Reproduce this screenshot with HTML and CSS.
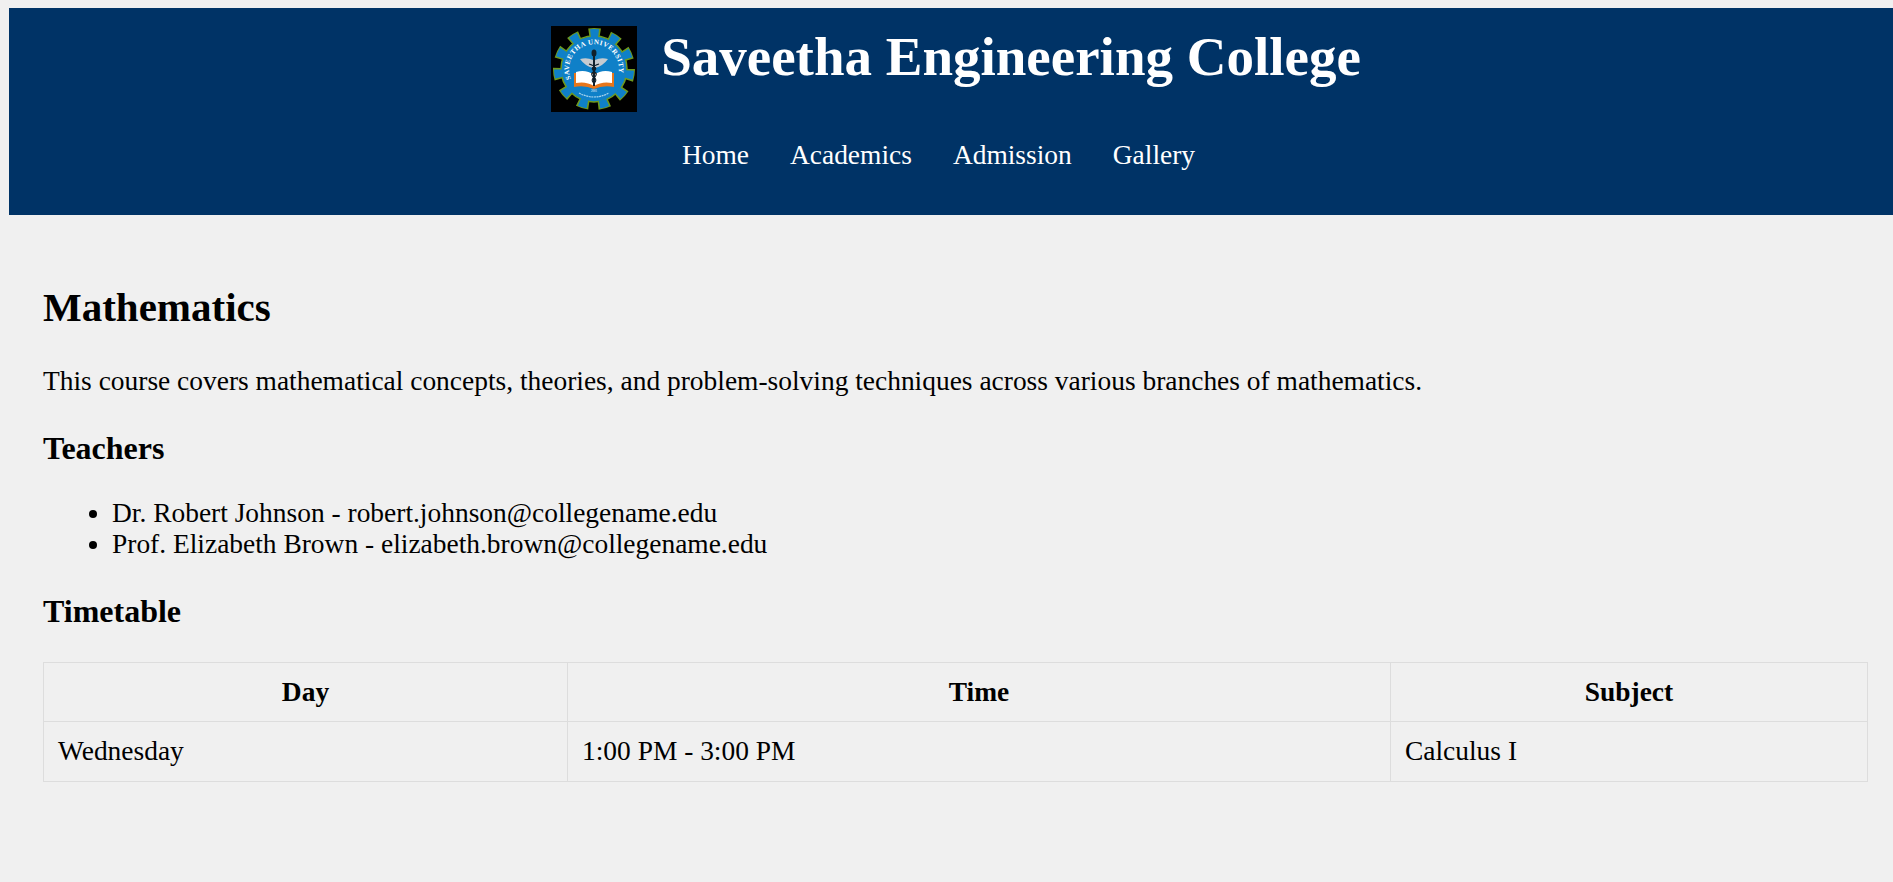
FILE: index.html
```html
<!DOCTYPE html>
<html lang="en">
<head>
    <meta charset="UTF-8">
    <meta name="viewport" content="width=device-width, initial-scale=1.0">
    <title>Mathematics</title>
    <link rel="stylesheet" href="styles.css">
</head>
<body>
    <header class="site-header">
        <div class="brand">
            <svg class="logo" viewBox="0 0 86 86" role="img" aria-label="Saveetha University logo">
                <rect width="86" height="86" fill="#000"/>
                <circle cx="43" cy="43" r="37" fill="none" stroke="#6f9a1e" stroke-width="8" pathLength="220" stroke-dasharray="11 9"/>
                <circle cx="43" cy="43" r="33" fill="#0f80c8" stroke="#6f9a1e" stroke-width="1.500"/>
                <circle cx="43" cy="43" r="36" fill="none" stroke="#0f80c8" stroke-width="8" pathLength="220" stroke-dasharray="8 12" stroke-dashoffset="-1.500"/>
                <path d="M23 47v14q11-2 20 2q9-4 20-2v-14z" fill="#e8761a"/>
                <path d="M25 46q10-3 18 3q8-6 18-3v11q-10-2-18 3q-8-5-18-3z" fill="#fff"/>
                <path d="M29 33q7-2 13 1v8q-8-2-13-9zM57 33q-7-2-13 1v8q8-2 13-9z" fill="#c6cbd0"/>
                <rect x="42" y="26" width="2" height="34" fill="#10202c"/>
                <ellipse cx="43" cy="27" rx="2.500" ry="3.500" fill="#10202c"/>
                <path d="M38 38q10 3 5 7t1 7q2 3-1 5M48 38q-10 3-5 7t-1 7q-2 3 1 5" fill="none" stroke="#10202c" stroke-width="1.200"/>
                <path id="logo-arc" d="M20 53a25 25 0 1 1 46 0" fill="none"/>
                <text class="logo-text"><textPath href="#logo-arc" textLength="92">SAVEETHA UNIVERSITY</textPath></text>
                <text class="logo-year" x="43" y="66" text-anchor="middle">2001</text>
                <path d="M28 67q15 8 30 0" fill="none" stroke="#a9d4ee" stroke-width="1.200" stroke-dasharray="2 .6"/>
            </svg>
            <h1>Saveetha Engineering College</h1>
        </div>
        <nav class="main-nav">
            <a href="#">Home</a>
            <a href="#">Academics</a>
            <a href="#">Admission</a>
            <a href="#">Gallery</a>
        </nav>
    </header>

    <main class="course">
        <h2>Mathematics</h2>
        <p>This course covers mathematical concepts, theories, and problem-solving techniques across various branches of mathematics.</p>

        <h3>Teachers</h3>
        <ul>
            <li>Dr. Robert Johnson - robert.johnson@collegename.edu</li>
            <li>Prof. Elizabeth Brown - elizabeth.brown@collegename.edu</li>
        </ul>

        <h3>Timetable</h3>
        <table class="timetable">
            <thead>
                <tr>
                    <th class="col-day">Day</th>
                    <th class="col-time">Time</th>
                    <th>Subject</th>
                </tr>
            </thead>
            <tbody>
                <tr>
                    <td>Wednesday</td>
                    <td>1:00 PM - 3:00 PM</td>
                    <td>Calculus I</td>
                </tr>
            </tbody>
        </table>
    </main>
</body>
</html>
```

FILE: styles.css
```css
html {
    background-color: #f0f0f0;
}
body {
    font-family: "Liberation Serif", "Times New Roman", serif;
    font-size: 27.45px;
    line-height: 31px;
    color: #000;
    margin: 8px 0 0 9px;
}
.site-header {
    background-color: #003366;
    color: #fff;
    height: 207px;
    display: flex;
    flex-direction: column;
    align-items: center;
}
.brand {
    display: flex;
    align-items: flex-start;
    gap: 24px;
    padding: 18px 0 0 10px;
}
.logo {
    width: 86px;
    height: 86px;
}
.logo-text {
    font-size: 7px;
    font-weight: bold;
    fill: #fff;
}
.logo-year {
    font-size: 3px;
    fill: #fff;
}
.brand h1 {
    font-size: 55px;
    margin: 0;
    line-height: 62px;
}
.main-nav {
    display: flex;
    gap: 41px;
    margin-top: 28px;
    padding-right: 25px;
}
.main-nav a {
    color: #fff;
    text-decoration: none;
}
.course {
    padding: 30px 25px 0 34px;
}
.course h2 {
    font-size: 41px;
    line-height: 47px;
    margin: 39px 0 35px;
}
.course p {
    margin: 0 0 33px;
}
.course h3 {
    font-size: 32px;
    line-height: 37px;
    margin: 0 0 31px;
}
.course ul {
    margin: 1px 0 33px;
    padding-left: 69px;
}
.timetable {
    width: 100%;
    margin-top: 32px;
    table-layout: fixed;
    border-collapse: collapse;
}
.timetable th, .timetable td {
    border: 1px solid #ddd;
    padding: 14px;
    text-align: left;
}
.timetable th {
    padding-bottom: 13px;
    text-align: center;
}
.col-day {
    width: 495px;
}
.col-time {
    width: 794px;
}
```
